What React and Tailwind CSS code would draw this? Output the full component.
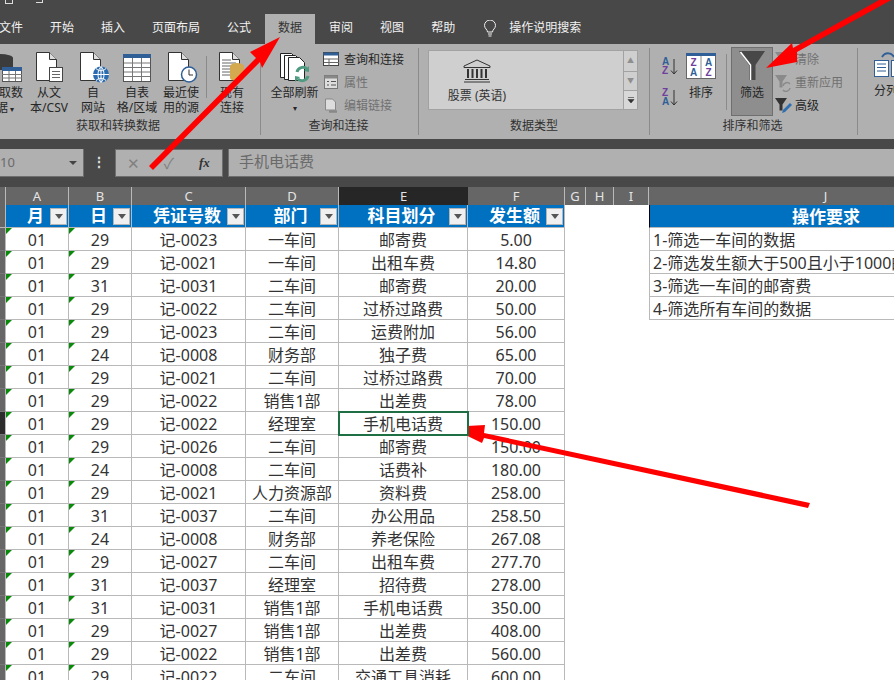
import React from 'react';

const tabs = ['文件', '开始', '插入', '页面布局', '公式', '数据', '审阅', '视图', '帮助'];

const columns = ['A', 'B', 'C', 'D', 'E', 'F', 'G', 'H', 'I', 'J'];

const rows = [
  ['29', '记-0023', '一车间', '邮寄费', '5.00'],
  ['29', '记-0021', '一车间', '出租车费', '14.80'],
  ['31', '记-0031', '二车间', '邮寄费', '20.00'],
  ['29', '记-0022', '二车间', '过桥过路费', '50.00'],
  ['29', '记-0023', '二车间', '运费附加', '56.00'],
  ['24', '记-0008', '财务部', '独子费', '65.00'],
  ['29', '记-0021', '二车间', '过桥过路费', '70.00'],
  ['29', '记-0022', '销售1部', '出差费', '78.00'],
  ['29', '记-0022', '经理室', '手机电话费', '150.00'],
  ['29', '记-0026', '二车间', '邮寄费', '150.00'],
  ['24', '记-0008', '二车间', '话费补', '180.00'],
  ['29', '记-0021', '人力资源部', '资料费', '258.00'],
  ['31', '记-0037', '二车间', '办公用品', '258.50'],
  ['24', '记-0008', '财务部', '养老保险', '267.08'],
  ['29', '记-0027', '二车间', '出租车费', '277.70'],
  ['31', '记-0037', '经理室', '招待费', '278.00'],
  ['31', '记-0031', '销售1部', '手机电话费', '350.00'],
  ['29', '记-0027', '销售1部', '出差费', '408.00'],
  ['29', '记-0022', '销售1部', '出差费', '560.00'],
  ['29', '记-0022', '二车间', '交通工具消耗', '600.00'],
];

const tasks = ['1-筛选一车间的数据', '2-筛选发生额大于500且小于1000的数据', '3-筛选一车间的邮寄费', '4-筛选所有车间的数据'];

const gridCols = 'grid grid-cols-[6px_63px_63px_114px_93px_129px_97px_21px_28px_35px_245px]';

const DocIcon = ({ children }) => (
  <svg width="36" height="32" viewBox="0 0 36 32">
    <path d="M5.500 1.500h13l7 7v21h-20z" fill="#fff" stroke="#333" />
    <path d="M18.500 1.500v7h7" fill="#ddd" stroke="#333" />
    {children}
  </svg>
);

const GridIcon = () => (
  <svg width="30" height="30" viewBox="0 0 30 30">
    <rect x="1.500" y="1.500" width="27" height="27" fill="#fff" stroke="#555" />
    <rect x="1" y="1" width="28" height="4" fill="#2f5f96" />
    <path d="M2 10h26M2 14.500h26M2 19h26M2 23.500h26M10.500 5v23M19.500 5v23" stroke="#777" fill="none" />
  </svg>
);

const RibbonButton = ({ icon, lines, caret }) => (
  <div className="w-[44px] flex flex-col items-center shrink-0">
    <div className="h-[33px] flex items-end justify-center">{icon}</div>
    <div className="mt-[2px] text-center leading-[15px] whitespace-nowrap">
      <div>{lines[0]}</div>
      <div>{lines[1]}{caret && <span className="text-[8px] align-middle"> ▾</span>}</div>
    </div>
  </div>
);

const SmallItem = ({ icon, label, disabled }) => (
  <div className={`h-[23px] flex items-center gap-[3px] whitespace-nowrap ${disabled ? 'text-[#707070]' : ''}`}>
    <div className="w-[19px] flex justify-center">{icon}</div>
    <span>{label}</span>
  </div>
);

const FilterIcon = () => (
  <svg width="28" height="31" viewBox="0 0 28 31">
    <path d="M1 1h26L17.500 15v15h-6.500V15z" fill="#484848" />
    <path d="M2.500 2l10 13v15" fill="none" stroke="#fff" strokeWidth="1.500" />
  </svg>
);

const SmallFilter = ({ fill, children }) => (
  <svg width="18" height="18" viewBox="0 0 18 18">
    <path d="M1 1h12L8.500 7.500v6H5.500v-6z" fill={fill} />
    {children}
  </svg>
);

const SortGlyph = ({ top, bottom }) => (
  <div className="flex items-center h-[20px]">
    <div className="flex flex-col text-[10px] font-bold leading-[9px] font-['Liberation_Sans',sans-serif]">
      <span className={top === 'A' ? 'text-[#2f5f96]' : 'text-[#6f3f9c]'}>{top}</span>
      <span className={bottom === 'A' ? 'text-[#2f5f96]' : 'text-[#6f3f9c]'}>{bottom}</span>
    </div>
    <svg width="8" height="17" viewBox="0 0 8 17" className="ml-[1px]">
      <path d="M4 1v15M1 12.500L4 16l3-3.500" stroke="#333" fill="none" />
    </svg>
  </div>
);

function Ribbon() {
  return (
    <div className="h-[95px] bg-[#b0b0b0] flex text-[12px] text-[#262626] shrink-0">
      {/* 获取和转换数据 */}
      <div className="w-[261px] shrink-0 border-r border-[#8b8b8b] my-[4px] flex flex-col">
        <div className="flex-1 flex pt-[2px] ml-[-17px]">
          <RibbonButton
            lines={['获取数', '据']}
            caret
            icon={
              <svg width="30" height="32" viewBox="0 0 30 32" className="overflow-visible">
                <ellipse cx="10" cy="7" rx="13" ry="4" fill="#3c3c3c" />
                <rect x="-3" y="7" width="26" height="12" fill="#3c3c3c" />
                <rect x="12.500" y="16.500" width="19" height="14" fill="#fff" stroke="#555" />
                <rect x="12" y="16" width="20" height="4" fill="#2f5f96" />
                <path d="M12 23.500h20M12 27h20M19 20v10M25.500 20v10" stroke="#777" />
              </svg>
            }
          />
          <RibbonButton
            lines={['从文', '本/CSV']}
            icon={
              <DocIcon>
                <rect x="18.500" y="16.500" width="13" height="14" fill="#fff" stroke="#444" />
                <path d="M21 20.500h8M21 23.500h8M21 26.500h8" stroke="#666" />
              </DocIcon>
            }
          />
          <RibbonButton
            lines={['自', '网站']}
            icon={
              <DocIcon>
                <circle cx="26" cy="23.500" r="8" fill="#2b6cb0" />
                <path d="M18 23.500h16M26 15.500v16M21 17.500c3 3 7 3 10 0M21 29.500c3-3 7-3 10 0M26 15.500c-4 4-4 12 0 16M26 15.500c4 4 4 12 0 16" stroke="#fff" fill="none" />
              </DocIcon>
            }
          />
          <RibbonButton lines={['自表', '格/区域']} icon={<GridIcon />} />
          <RibbonButton
            lines={['最近使', '用的源']}
            icon={
              <DocIcon>
                <circle cx="26" cy="23.500" r="7.500" fill="#fff" stroke="#2f5f96" strokeWidth="1.500" />
                <path d="M26 18.500v5.500h4" stroke="#333" fill="none" />
              </DocIcon>
            }
          />
          <div className="w-px h-[42px] bg-[#8b8b8b] mt-[6px] mx-[3px] shrink-0" />
          <RibbonButton
            lines={['现有', '连接']}
            icon={
              <DocIcon>
                <path d="M8 9h9M8 12h14M8 15h14M8 18h14M8 21h14M8 24h14" stroke="#666" />
                <path d="M16 15a7 3 0 0 1 14 0v12a7 3 0 0 1-14 0z" fill="#d4a94f" />
              </DocIcon>
            }
          />
        </div>
        <div className="h-[18px] text-center leading-[18px] pr-[24px] text-[#303030]">获取和转换数据</div>
      </div>

      {/* 查询和连接 */}
      <div className="w-[158px] shrink-0 border-r border-[#8b8b8b] my-[4px] flex flex-col">
        <div className="flex-1 flex pt-[2px]">
          <div className="w-[63px] ml-[2px] flex flex-col items-center">
            <div className="h-[33px] flex items-end">
              <svg width="32" height="31" viewBox="0 0 32 31">
                <path d="M1.500 1.500h11l5 5v19h-16z" fill="#fff" stroke="#222" />
                <path d="M5.500 3.500h11l5 5v19h-16z" fill="#fff" stroke="#222" />
                <path d="M9.500 5.500h11l5 5v18h-16z" fill="#fff" stroke="#222" />
                <path d="M18 20a6 6 0 0 1 10-3M29 24a6 6 0 0 1-10 3" fill="none" stroke="#4f9a80" strokeWidth="3" />
                <path d="M25 19l5 1 0-6zM21 25l-5-1 0 6z" fill="#4f9a80" />
              </svg>
            </div>
            <div className="mt-[2px] leading-[15px] whitespace-nowrap">全部刷新</div>
            <div className="text-[8px] leading-[15px]">▾</div>
          </div>
          <div className="ml-[-4px] mt-[-2px] flex flex-col">
            <SmallItem
              label="查询和连接"
              icon={
                <svg width="17" height="15" viewBox="0 0 17 15">
                  <rect x=".5" y=".5" width="15" height="13" fill="#fff" stroke="#444" />
                  <rect x=".5" y=".5" width="15" height="3" fill="#2f5f96" />
                  <path d="M1 7h15M1 10.500h15M6 7v7" stroke="#666" />
                </svg>
              }
            />
            <SmallItem
              disabled
              label="属性"
              icon={
                <svg width="15" height="15" viewBox="0 0 15 15">
                  <rect x=".5" y=".5" width="13" height="13" fill="#ddd" stroke="#777" />
                  <rect x=".5" y=".5" width="13" height="3" fill="#888" />
                  <path d="M3 6.500h2M3 10h2M7 6.500h5M7 10h5" stroke="#555" />
                </svg>
              }
            />
            <SmallItem
              disabled
              label="编辑链接"
              icon={
                <svg width="15" height="16" viewBox="0 0 15 16">
                  <path d="M1.500 1h7l3 3v8h-10z" fill="#ddd" stroke="#888" />
                  <path d="M5 13.500h8" stroke="#888" strokeWidth="2.500" />
                </svg>
              }
            />
          </div>
        </div>
        <div className="h-[18px] text-center leading-[18px] pr-[2px] text-[#303030]">查询和连接</div>
      </div>

      {/* 数据类型 */}
      <div className="w-[231px] shrink-0 border-r border-[#8b8b8b] my-[4px] flex flex-col">
        <div className="flex-1 pt-[2px] pl-[9px]">
          <div className="w-[210px] h-[60px] flex bg-[#cfcfcf] border border-[#a2a2a2]">
            <div className="flex-1 pl-[18px]">
              <div className="w-[60px] flex flex-col items-center pt-[8px]">
                <svg width="28" height="24" viewBox="0 0 28 24">
                  <path d="M14 1L27 7v1.500H1V7z" fill="#cfcfcf" stroke="#333" />
                  <path d="M5 10v9M9.500 10v9M14 10v9M18.500 10v9M23 10v9" stroke="#333" strokeWidth="2" />
                  <path d="M2 20.500h24M1 23h26" stroke="#333" />
                </svg>
                <div className="mt-[4px] whitespace-nowrap text-[#333]">股票 (英语)</div>
              </div>
            </div>
            <div className="w-[14px] border-l border-[#a2a2a2] flex flex-col text-[#8f8f8f]">
              <div className="h-[21px] border-b border-[#a2a2a2] flex items-center justify-center text-[7px]">▲</div>
              <div className="h-[19px] border-b border-[#a2a2a2] flex items-center justify-center text-[7px]">▼</div>
              <div className="flex-1 bg-[#d8d8d8] flex items-center justify-center">
                <svg width="8" height="8" viewBox="0 0 8 8">
                  <path d="M1 1.500h6M1 3.500h6L4 7z" fill="#333" stroke="#333" strokeWidth=".6" />
                </svg>
              </div>
            </div>
          </div>
        </div>
        <div className="h-[18px] text-center leading-[18px] text-[#303030]">数据类型</div>
      </div>

      {/* 排序和筛选 */}
      <div className="w-[208px] shrink-0 border-r border-[#8b8b8b] my-[4px] flex flex-col">
        <div className="flex-1 flex">
          <div className="w-[36px] pl-[12px] pt-[8px] flex flex-col gap-[11px]">
            <SortGlyph top="A" bottom="Z" />
            <SortGlyph top="Z" bottom="A" />
          </div>
          <div className="w-[30px] flex flex-col items-center pt-[5px]">
            <svg width="30" height="26" viewBox="0 0 30 26" className="shrink-0 font-['Liberation_Sans',sans-serif]">
              <rect x=".5" y=".5" width="29" height="25" fill="#fff" stroke="#666" />
              <rect x="0" y="0" width="30" height="3" fill="#2f5f96" />
              <path d="M15 3v22" stroke="#888" />
              <text x="7.500" y="13" fontSize="10" fontWeight="700" textAnchor="middle" fill="#6f3f9c">Z</text>
              <text x="7.500" y="23" fontSize="10" fontWeight="700" textAnchor="middle" fill="#2f5f96">A</text>
              <text x="22.500" y="13" fontSize="10" fontWeight="700" textAnchor="middle" fill="#2f5f96">A</text>
              <text x="22.500" y="23" fontSize="10" fontWeight="700" textAnchor="middle" fill="#6f3f9c">Z</text>
            </svg>
            <div className="mt-[6px] leading-[15px] whitespace-nowrap">排序</div>
          </div>
          <div className="w-px h-[56px] bg-[#8b8b8b] mt-[6px] ml-[10px]" />
          <div className="w-[42px] h-[69px] ml-[4px] mt-[-1px] bg-[#8e8e8e] border border-[#6f6f6f] flex flex-col items-center pt-[2px]">
            <FilterIcon />
            <div className="mt-[4px] leading-[15px]">筛选</div>
          </div>
          <div className="flex flex-col">
            <SmallItem disabled label="清除" icon={<SmallFilter fill="#8a8a8a" />} />
            <SmallItem
              disabled
              label="重新应用"
              icon={
                <SmallFilter fill="#8a8a8a">
                  <path d="M9 12a4 4 0 0 1 7-2M16 14a4 4 0 0 1-7 2" fill="none" stroke="#8a8a8a" strokeWidth="1.500" />
                </SmallFilter>
              }
            />
            <SmallItem
              label="高级"
              icon={
                <SmallFilter fill="#333">
                  <path d="M8 16l1-3 7-7 2 2-7 7z" fill="#2f6fb0" />
                </SmallFilter>
              }
            />
          </div>
        </div>
        <div className="h-[18px] text-center leading-[18px] pr-[2px] text-[#303030]">排序和筛选</div>
      </div>

      {/* 分列 */}
      <div className="flex-1 pt-[6px] pl-[16px] overflow-hidden whitespace-nowrap">
        <svg width="40" height="32" viewBox="0 0 40 32">
          <rect x=".5" y="10.500" width="14" height="16" fill="#fff" stroke="#2f5f96" />
          <rect x="17.500" y="10.500" width="14" height="16" fill="#fff" stroke="#2f5f96" />
          <path d="M3 14h9M3 17.500h9M3 21h9M20 14h9M20 17.500h9" stroke="#2f5f96" />
          <path d="M8 7c3-5 9-5 12 0" stroke="#2f5f96" strokeWidth="2" fill="none" />
        </svg>
        <div className="mt-[1px] leading-[15px]">分列</div>
      </div>
    </div>
  );
}

function FilterButton() {
  return (
    <div className="w-[17px] h-[17px] bg-[#f0f0f0] border border-[#b5b5b5] flex items-center justify-center">
      <div className="w-0 h-0 border-x-[4px] border-x-transparent border-t-[5px] border-t-[#555]" />
    </div>
  );
}

function HeaderCell({ label }) {
  return (
    <div className="h-[23px] bg-[#0070c0] text-white text-[17px] font-bold border-b border-r border-[#b9b9b9] flex items-center justify-end pr-[1px] relative">
      <span className="absolute left-0 right-0 text-center leading-[24px] pr-[3px]">{label}</span>
      <span className="relative"><FilterButton /></span>
    </div>
  );
}

function DataCell({ value, mark, selected }) {
  return (
    <div className={`h-[23px] bg-white border-r border-b border-[#b9b9b9] text-center leading-[24px] whitespace-nowrap relative ${selected ? 'outline-2 -outline-offset-1 outline-[#1f6f45] z-10' : ''}`}>
      {mark && <div className="absolute left-0 top-0 w-0 h-0 border-r-[6px] border-r-transparent border-t-[6px] border-t-[#0a8a0a]" />}
      {value}
    </div>
  );
}

function Sheet() {
  return (
    <div className="flex-1 overflow-hidden text-[16px] text-[#333]">
      <div className={`${gridCols} h-[18px] bg-[#666666] text-[13px] text-[#e4e4e4]`}>
        <div className="border-r border-b border-[#b9b9b9]" />
        {columns.map((c) => (
          <div
            key={c}
            className={`text-center leading-[19px] ${
              c === 'E' ? 'bg-[#262626] border-b-2 border-[#1f6f45]' : 'border-r border-b border-[#b9b9b9]'
            } ${c === 'J' ? 'pl-[108px] border-r-0' : ''}`}
          >
            {c}
          </div>
        ))}
      </div>
      <div className={gridCols}>
        <div className="h-[23px] bg-[#666666] border-r border-b border-[#b9b9b9]" />
        {['月', '日', '凭证号数', '部门', '科目划分', '发生额'].map((h) => (
          <HeaderCell key={h} label={h} />
        ))}
        <div className="col-span-3 h-[23px] bg-white" />
        <div className="h-[23px] bg-[#0070c0] text-white text-[17px] font-bold text-center leading-[24px] border-l border-black border-b border-b-[#b9b9b9] pl-[108px] whitespace-nowrap">操作要求</div>
        {rows.map((row, i) => (
          <React.Fragment key={i}>
            <div className={`h-[23px] border-r border-b border-r-[#b9b9b9] border-b-[#777] ${i === 8 ? 'bg-[#2b2b2b]' : 'bg-[#666666]'}`} />
            <DataCell value="01" mark />
            <DataCell value={row[0]} mark />
            <DataCell value={row[1]} />
            <DataCell value={row[2]} />
            <DataCell value={row[3]} selected={i === 8} />
            <DataCell value={row[4]} />
            <div className="col-span-3 h-[23px] bg-white" />
            {tasks[i] ? (
              <div className="h-[23px] bg-white border-l border-b border-[#b9b9b9] leading-[24px] pl-[3px] whitespace-nowrap overflow-hidden">{tasks[i]}</div>
            ) : (
              <div className="h-[23px] bg-white" />
            )}
          </React.Fragment>
        ))}
      </div>
    </div>
  );
}

function Arrows() {
  return (
    <svg className="absolute left-0 top-0 pointer-events-none" width="894" height="680" viewBox="0 0 894 680">
      <g fill="#ff0000">
        <path d="M280 37L250 52 256 58 149 166 153 170 260 62 262 68z" />
        <path d="M766 68L792 43 793 48 890 -6 893 -1 797 52 797 62z" />
        <path d="M449 427L485 425 484 433 810 503 808 508 484 438 482 443z" />
      </g>
    </svg>
  );
}

export default function App() {
  return (
    <div className="relative w-[894px] h-[680px] overflow-hidden bg-white flex flex-col font-['Noto_Sans','Noto_Sans_CJK_SC',sans-serif]">
      <div className="h-[14px] bg-[#484848] shrink-0 relative overflow-hidden">
        <div className="absolute left-[5px] top-[-6px] w-[8px] h-[10px] border border-[#ddd]" />
        <div className="absolute left-[36px] top-[-3px] w-[7px] h-[6px] border-r border-b border-[#ddd]" />
      </div>
      <div className="h-[30px] bg-[#484848] shrink-0 flex items-stretch gap-px ml-[-14px] text-[12px] text-[#f2f2f2] whitespace-nowrap">
        {tabs.map((t) => (
          <div
            key={t}
            className={`px-[13px] leading-[28px] ${t === '数据' ? 'bg-[#b0b0b0] text-[#333]' : ''}`}
          >
            {t}
          </div>
        ))}
        <div className="ml-[14px] flex items-center gap-[12px] pb-[2px]">
          <svg width="14" height="17" viewBox="0 0 14 17" fill="none" stroke="#f2f2f2">
            <path d="M4.500 12c0-2.500-3-3.500-3-6.500a5.500 5.500 0 0 1 11 0c0 3-3 4-3 6.500z" />
            <path d="M5 14h4M5.500 16h3" />
          </svg>
          <span>操作说明搜索</span>
        </div>
      </div>
      <Ribbon />
      {/* 名称框和编辑栏 */}
      <div className="h-[48px] bg-[#484848] shrink-0 pt-[10px] flex items-start text-[#6a6a6a]">
        <div className="w-[84px] h-[28px] bg-[#b0b0b0] border-r border-b border-[#6e6e6e] flex items-center justify-between pr-[6px] text-[13px]">
          <span>10</span>
          <div className="w-0 h-0 border-x-[4px] border-x-transparent border-t-[4px] border-t-[#444]" />
        </div>
        <div className="w-[30px] text-center text-[14px] font-bold leading-[26px] text-[#ddd]">⋮</div>
        <div className="w-[108px] ml-[1px] h-[28px] bg-[#b0b0b0] border border-[#6e6e6e] flex items-center text-[#808080]">
          <span className="w-[36px] text-center text-[15px]">✕</span>
          <span className="w-[36px] text-center text-[15px]">✓</span>
          <span className="w-[36px] text-center text-[13px] italic font-bold font-['Liberation_Serif',serif] text-[#333]">fx</span>
        </div>
        <div className="flex-1 ml-[5px] h-[28px] bg-[#b0b0b0] border-l border-b border-[#6e6e6e] pl-[10px] text-[15px] leading-[25px]">手机电话费</div>
      </div>
      <Sheet />
      <Arrows />
    </div>
  );
}
